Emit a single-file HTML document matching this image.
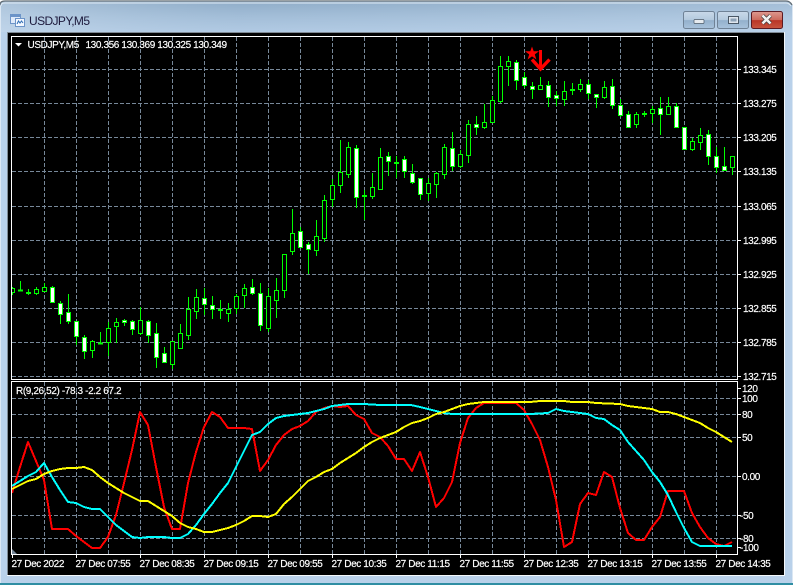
<!DOCTYPE html>
<html><head><meta charset="utf-8"><title>USDJPY,M5</title>
<style>
html,body{margin:0;padding:0;width:795px;height:585px;overflow:hidden;background:#fff}
svg{display:block}
text{font-family:"Liberation Sans",sans-serif;font-size:10px;letter-spacing:-.38px;fill:#fff;stroke:#fff;stroke-width:.18px}
</style></head><body>
<svg width="795" height="585" viewBox="0 0 795 585" xmlns="http://www.w3.org/2000/svg">
<defs>
<linearGradient id="tb" x1="0" y1="0" x2="0" y2="1"><stop offset="0" stop-color="#8aa8c4"/><stop offset=".5" stop-color="#a5c0da"/><stop offset="1" stop-color="#b9d1ea"/></linearGradient>
<linearGradient id="tb2" x1="0" y1="0" x2="1" y2="0"><stop offset="0" stop-color="#c4d7ea" stop-opacity=".6"/><stop offset=".3" stop-color="#9fbad4" stop-opacity=".3"/><stop offset="1" stop-color="#bcd2e8" stop-opacity=".5"/></linearGradient>
<linearGradient id="btn" x1="0" y1="0" x2="0" y2="1"><stop offset="0" stop-color="#c9d9e9"/><stop offset=".5" stop-color="#b3c9de"/><stop offset=".52" stop-color="#93b0cc"/><stop offset="1" stop-color="#a9c3dc"/></linearGradient>
<linearGradient id="cls" x1="0" y1="0" x2="0" y2="1"><stop offset="0" stop-color="#dd9a90"/><stop offset=".5" stop-color="#cc6a5c"/><stop offset=".52" stop-color="#b93426"/><stop offset="1" stop-color="#c8553f"/></linearGradient>
<clipPath id="c1"><rect x="12" y="37" width="725" height="342"/></clipPath>
</defs>

<!-- window frame -->
<path d="M0 6Q0 1 5 1H786Q791 1 793 6V584H0Z" fill="#b9d1ea"/>
<path d="M0 8Q0 2 5 2H786Q791 2 793 8V32H0Z" fill="url(#tb)"/>
<path d="M0 8Q0 2 5 2H786Q791 2 793 8V32H0Z" fill="url(#tb2)"/>
<path d="M0 5Q0 1 5 1H786Q790 1 792 5" fill="none" stroke="#5f6a72" stroke-width="1.2"/>
<path d="M1 6Q1 3 5 3H786Q789 3 791 6" fill="none" stroke="#dfeaf4" stroke-width="1"/>
<path d="M.5 6V583" stroke="#dbe7f3"/><path d="M792.5 6V583" stroke="#dbe7f3"/>
<rect x="0" y="583" width="793" height="2" fill="#2f8ea3"/>
<rect x="793" y="0" width="2" height="585" fill="#fff"/>
<rect x="7" y="32" width="778" height="544" fill="#f4f8fb"/>
<rect x="7" y="32" width="777" height="1" fill="#7f8a94"/>
<rect x="7" y="32" width="1" height="543" fill="#7f8a94"/>

<!-- title icon -->
<path d="M10.5 14.5h10v9h-10z" fill="#dfeafa" stroke="#6c94c8"/>
<rect x="11" y="15" width="9" height="2" fill="#6c94c8"/>
<path d="M15.5 18.5h9v8h-9z" fill="#f4f8ff" stroke="#6c94c8"/>
<path d="M17 24l1.5-3 1.5 2 1.5-2 1.5 2" fill="none" stroke="#2f6db5"/>
<text x="29" y="25" style="font-size:12px;letter-spacing:-.6px;fill:#1d1a3c;stroke:none">USDJPY,M5</text>

<!-- buttons -->
<rect x="683.5" y="11.5" width="31" height="17" rx="2" fill="url(#btn)" stroke="#6f8296"/>
<rect x="694" y="19.500" width="10" height="4" rx="1" fill="#e6ebf0" stroke="#4a5866" stroke-width=".7"/>
<rect x="717.500" y="11.5" width="31" height="17" rx="2" fill="url(#btn)" stroke="#6f8296"/>
<rect x="728.500" y="16.500" width="10" height="7" fill="#dfe6ee" stroke="#4a5866"/><rect x="730.500" y="18.500" width="6" height="3" fill="#8ea3b8"/>
<rect x="751.500" y="11.500" width="31" height="17" rx="2" fill="url(#cls)" stroke="#5d1a22"/>
<path d="M762.500 15.500l8 8M770.500 15.500l-8 8" stroke="#3b3b3b" stroke-width="4"/>
<path d="M762.500 15.500l8 8M770.500 15.500l-8 8" stroke="#f2f2f2" stroke-width="2.600"/>

<!-- client -->
<rect x="8" y="33" width="776" height="542" fill="#000"/>

<!-- grid top -->
<path d="M12 69.500H737M12 103.500H737M12 137.500H737M12 171.500H737M12 206.500H737M12 240.500H737M12 274.500H737M12 308.500H737M12 342.500H737M12 376.500H737M44.500 37V379M76.500 37V379M108.500 37V379M140.500 37V379M172.500 37V379M204.500 37V379M236.500 37V379M268.500 37V379M300.500 37V379M332.500 37V379M364.500 37V379M396.500 37V379M428.500 37V379M460.500 37V379M492.500 37V379M524.500 37V379M556.500 37V379M588.500 37V379M620.500 37V379M652.500 37V379M684.500 37V379M716.500 37V379" stroke="#778899" stroke-dasharray="4 2" fill="none"/>
<!-- grid bottom -->
<path d="M12 398.500H737M12 414.500H737M12 437.500H737M12 476.500H737M12 515.500H737M12 538.500H737M44.500 382V554M76.500 382V554M108.500 382V554M140.500 382V554M172.500 382V554M204.500 382V554M236.500 382V554M268.500 382V554M300.500 382V554M332.500 382V554M364.500 382V554M396.500 382V554M428.500 382V554M460.500 382V554M492.500 382V554M524.500 382V554M556.500 382V554M588.500 382V554M620.500 382V554M652.500 382V554M684.500 382V554M716.500 382V554" stroke="#778899" stroke-dasharray="4 2" fill="none"/>

<!-- candles -->
<g clip-path="url(#c1)" shape-rendering="crispEdges" stroke="#00ff00">
<path fill="none" d="M12.500 287V295M20.500 281V291M28.500 289V295M36.500 287V295M44.500 283V292M52.500 286V303M60.500 301V324M68.500 294V324M76.500 321V345M84.500 335V359M92.500 340V358M100.500 332V344M108.500 322V356M116.500 318V343M124.500 319V326M132.500 320V335M140.500 307V335M148.500 320V343M156.500 323V368M164.500 347V363M172.500 341V369M180.500 324V348M188.500 297V340M196.500 289V319M204.500 288V315M212.500 296V319M220.500 300V319M228.500 303V322M236.500 294V314M244.500 284V308M252.500 279V295M260.500 283V331M268.500 288V332M276.500 278V318M284.500 254V298M292.500 209V255M300.500 227V248M308.500 242V274M316.500 220V256M324.500 195V242M332.500 179V207M340.500 140V193M348.500 142V178M356.500 145V208M364.500 190V220M372.500 173V199M380.500 148V190M388.500 152V176M396.500 156V178M404.500 156V178M412.500 164V184M420.500 178V200M428.500 178V201M436.500 172V198M444.500 144V179M452.500 132V171M460.500 150V168M468.500 120V163M476.500 116V135M484.500 104V129M492.500 96V123M500.500 56V103M508.500 56V86M516.500 60V90M524.500 72V88M532.500 82V99M540.500 77V89M548.500 81V107M556.500 91V106M564.500 81V106M572.500 83V95M580.500 79V92M588.500 80V99M596.500 94V108M604.500 81V99M612.500 79V109M620.500 99V117M628.500 111V127M636.500 112V128M644.500 111V117M652.500 106V123M660.500 97V135M668.500 97V114M676.500 103V128M684.500 127V149M692.500 138V151M700.500 128V150M708.500 130V165M716.500 147V173M724.500 147V170M732.500 156V175"/>
<path fill="#000" d="M10.500 288.500h4v4h-4zM34.500 289.500h4v4h-4zM42.500 287.500h4v4h-4zM90.500 341.500h4v9h-4zM106.500 328.500h4v14h-4zM114.500 322.500h4v4h-4zM138.500 320.500h4v13h-4zM170.500 341.500h4v23h-4zM178.500 333.500h4v15h-4zM186.500 309.500h4v26h-4zM194.500 297.500h4v14h-4zM226.500 309.500h4v4h-4zM234.500 296.500h4v12h-4zM242.500 288.500h4v7h-4zM266.500 296.500h4v32h-4zM274.500 290.500h4v10h-4zM282.500 254.500h4v36h-4zM290.500 233.500h4v18h-4zM314.500 236.500h4v14h-4zM322.500 200.500h4v38h-4zM330.500 185.500h4v14h-4zM338.500 172.500h4v13h-4zM346.500 147.500h4v27h-4zM370.500 187.500h4v9h-4zM378.500 157.500h4v32h-4zM426.500 183.500h4v10h-4zM434.500 173.500h4v11h-4zM442.500 147.500h4v27h-4zM458.500 154.500h4v12h-4zM466.500 124.500h4v31h-4zM482.500 122.500h4v5h-4zM490.500 100.500h4v22h-4zM498.500 66.500h4v35h-4zM506.500 61.500h4v5h-4zM538.500 85.500h4v4h-4zM562.500 91.500h4v8h-4zM578.500 84.500h4v5h-4zM602.500 87.500h4v10h-4zM634.500 114.500h4v10h-4zM650.500 109.500h4v4h-4zM666.500 106.500h4v8h-4zM690.500 141.500h4v8h-4zM698.500 135.500h4v7h-4zM730.500 156.500h4v11h-4z"/>
<path fill="#fff" d="M50.500 287.500h4v15h-4zM58.500 303.500h4v11h-4zM66.500 312.500h4v9h-4zM74.500 321.500h4v15h-4zM82.500 337.500h4v14h-4zM122.500 320.500h4v2h-4zM130.500 321.500h4v8h-4zM146.500 321.500h4v14h-4zM154.500 333.500h4v24h-4zM162.500 353.500h4v9h-4zM202.500 298.500h4v6h-4zM210.500 305.500h4v4h-4zM250.500 287.500h4v6h-4zM258.500 293.500h4v32h-4zM298.500 231.500h4v16h-4zM306.500 244.500h4v5h-4zM354.500 148.500h4v49h-4zM386.500 156.500h4v5h-4zM402.500 159.500h4v12h-4zM410.500 173.500h4v9h-4zM418.500 178.500h4v16h-4zM450.500 148.500h4v18h-4zM474.500 124.500h4v3h-4zM514.500 62.500h4v18h-4zM522.500 77.500h4v8h-4zM530.500 86.500h4v3h-4zM546.500 85.500h4v12h-4zM554.500 95.500h4v3h-4zM586.500 84.500h4v9h-4zM594.500 94.500h4v3h-4zM610.500 86.500h4v19h-4zM618.500 105.500h4v10h-4zM626.500 114.500h4v13h-4zM658.500 108.500h4v6h-4zM674.500 106.500h4v21h-4zM682.500 127.500h4v22h-4zM706.500 134.500h4v22h-4zM714.500 156.500h4v11h-4zM722.500 166.500h4v4h-4z"/>
<path fill="none" stroke-width="2" d="M18 290.500h5M26 293h5M98 343.500h5M218 310h5M362 196h5M394 163h5M570 90h5M642 114h5"/>
</g>

<!-- arrow + star -->
<path d="M540.500 50V69" fill="none" stroke="#ff0000" stroke-width="3"/>
<path d="M532 59.500l8.500 9.500 9-9.500" fill="none" stroke="#ff0000" stroke-width="3.400"/>
<path d="M532 46.500l1.700 4.700h5.300l-4.200 3.200 1.600 5.100-4.400-3.100-4.400 3.100 1.600-5.100-4.200-3.200h5.300z" fill="#ff0000"/>

<!-- indicator lines -->
<g fill="none" stroke-width="2" stroke-linejoin="round" shape-rendering="crispEdges">
<polyline stroke="#ff0000" points="12,493 20,467 28,442 36,461 44,480 52,529 60,529 68,529 76,536 84,542 92,548 100,548 108,537 116,515 124,483 132,450 140,412 148,425 156,467 164,507 172,529 180,529 188,483 196,452 204,427 212,412 220,417 228,428 236,428 244,428 252,429 260,471 268,460 276,445 284,435 292,429 300,426 308,421 316,412 324,408 332,406 340,407 348,406 356,415 364,419 372,433 380,437 388,446 396,459 404,459 412,471 420,452 428,477 436,507 444,498 452,482 460,443 468,418 476,408 484,403 492,403 500,403 508,403 516,403 524,410 532,424 540,440 548,467 556,500 564,547 572,542 580,504 588,493 596,495 604,472 612,477 620,508 628,533 636,540 644,540 652,527 660,517 668,491 676,491 684,491 692,513 700,527 708,538 716,544 724,546 732,542"/>
<polyline stroke="#00ffff" points="12,486 20,481 28,476 36,472 44,463 52,477 60,490 68,502 76,503 84,507 92,509 100,509 108,517 116,525 124,531 132,537 140,538 148,537 156,537 164,537 172,538 180,538 188,534 196,525 204,514 212,504 220,493 228,483 236,467 244,451 252,435 260,432 268,424 276,418 284,416 292,415 300,414 308,413 316,411 324,409 332,406 340,405 348,404 364,404 380,405 396,405 411,405 420,407 428,409 436,411 444,413 452,414 530,414 548,413 556,409 564,411 572,412 580,413 588,414 596,418 604,419 612,425 620,430 628,442 636,451 644,460 652,472 660,482 668,495 676,512 684,528 692,542 700,546 732,546"/>
<polyline stroke="#ffff00" points="12,489 20,485 28,481 36,479 44,474 52,471 60,469 68,468 76,468 84,467 92,470 100,477 108,483 116,488 124,493 132,497 140,501 148,501 156,506 164,511 172,516 180,523 188,527 196,529 204,532 212,532 220,530 228,528 236,525 244,521 252,516 260,516 268,517 276,514 284,504 292,497 300,489 308,481 316,477 324,472 332,469 340,463 348,458 356,453 364,447 372,442 380,438 388,435 396,432 404,427 412,423 420,421 428,418 436,414 444,412 452,409 460,406 468,404 476,403 484,402 530,402 540,401 564,401 572,402 588,402 596,403 620,404 628,406 644,408 652,409 660,412 668,412 676,414 684,417 692,420 700,423 708,428 716,432 724,437 732,442"/>
</g>

<!-- boxes & ticks -->
<path d="M11.500 36.500H737.500V379.500H11.500ZM11.500 381.500H737.500V554.500H11.500Z" fill="none" stroke="#fff"/>
<path d="M738 69.500h3M738 103.500h3M738 137.500h3M738 171.500h3M738 206.500h3M738 240.500h3M738 274.500h3M738 308.500h3M738 342.500h3M738 376.500h3M738 388.500h3M738 398.500h3M738 414.500h3M738 437.500h3M738 476.500h3M738 515.500h3M738 538.500h3M738 547.500h3M12.500 555v3M76.500 555v3M140.500 555v3M204.500 555v3M268.500 555v3M332.500 555v3M396.500 555v3M460.500 555v3M524.500 555v3M588.500 555v3M652.500 555v3M716.500 555v3" stroke="#fff"/>
<path d="M12 549l5 5h-5z" fill="#778899"/>
<path d="M15 43h7l-3.500 3.500z" fill="#fff"/>

<!-- texts -->
<text x="27.500" y="48">USDJPY,M5</text>
<text x="85.500" y="48">130.356 130.369 130.325 130.349</text>
<text x="16" y="394">R(9,26,52) -78.3 -2.2 67.2</text>

<text x="743" y="73">133.345</text>
<text x="743" y="107">133.275</text>
<text x="743" y="141">133.205</text>
<text x="743" y="175">133.135</text>
<text x="743" y="210">133.065</text>
<text x="743" y="244">132.995</text>
<text x="743" y="278">132.925</text>
<text x="743" y="312">132.855</text>
<text x="743" y="346">132.785</text>
<text x="743" y="380">132.715</text>

<text x="742" y="392">120</text>
<text x="742" y="402">100</text>
<text x="742" y="418">80</text>
<text x="742" y="441">50</text>
<text x="742" y="480">0.00</text>
<text x="740" y="519">-50</text>
<text x="740" y="542">-80</text>
<text x="740" y="551">-100</text>

<text x="11.500" y="567">27 Dec 2022</text>
<text x="75.500" y="567">27 Dec 07:55</text>
<text x="139.500" y="567">27 Dec 08:35</text>
<text x="203.500" y="567">27 Dec 09:15</text>
<text x="267.500" y="567">27 Dec 09:55</text>
<text x="331.500" y="567">27 Dec 10:35</text>
<text x="395.500" y="567">27 Dec 11:15</text>
<text x="459.500" y="567">27 Dec 11:55</text>
<text x="523.500" y="567">27 Dec 12:35</text>
<text x="587.500" y="567">27 Dec 13:15</text>
<text x="651.500" y="567">27 Dec 13:55</text>
<text x="715.500" y="567">27 Dec 14:35</text>
</svg>
</body></html>
